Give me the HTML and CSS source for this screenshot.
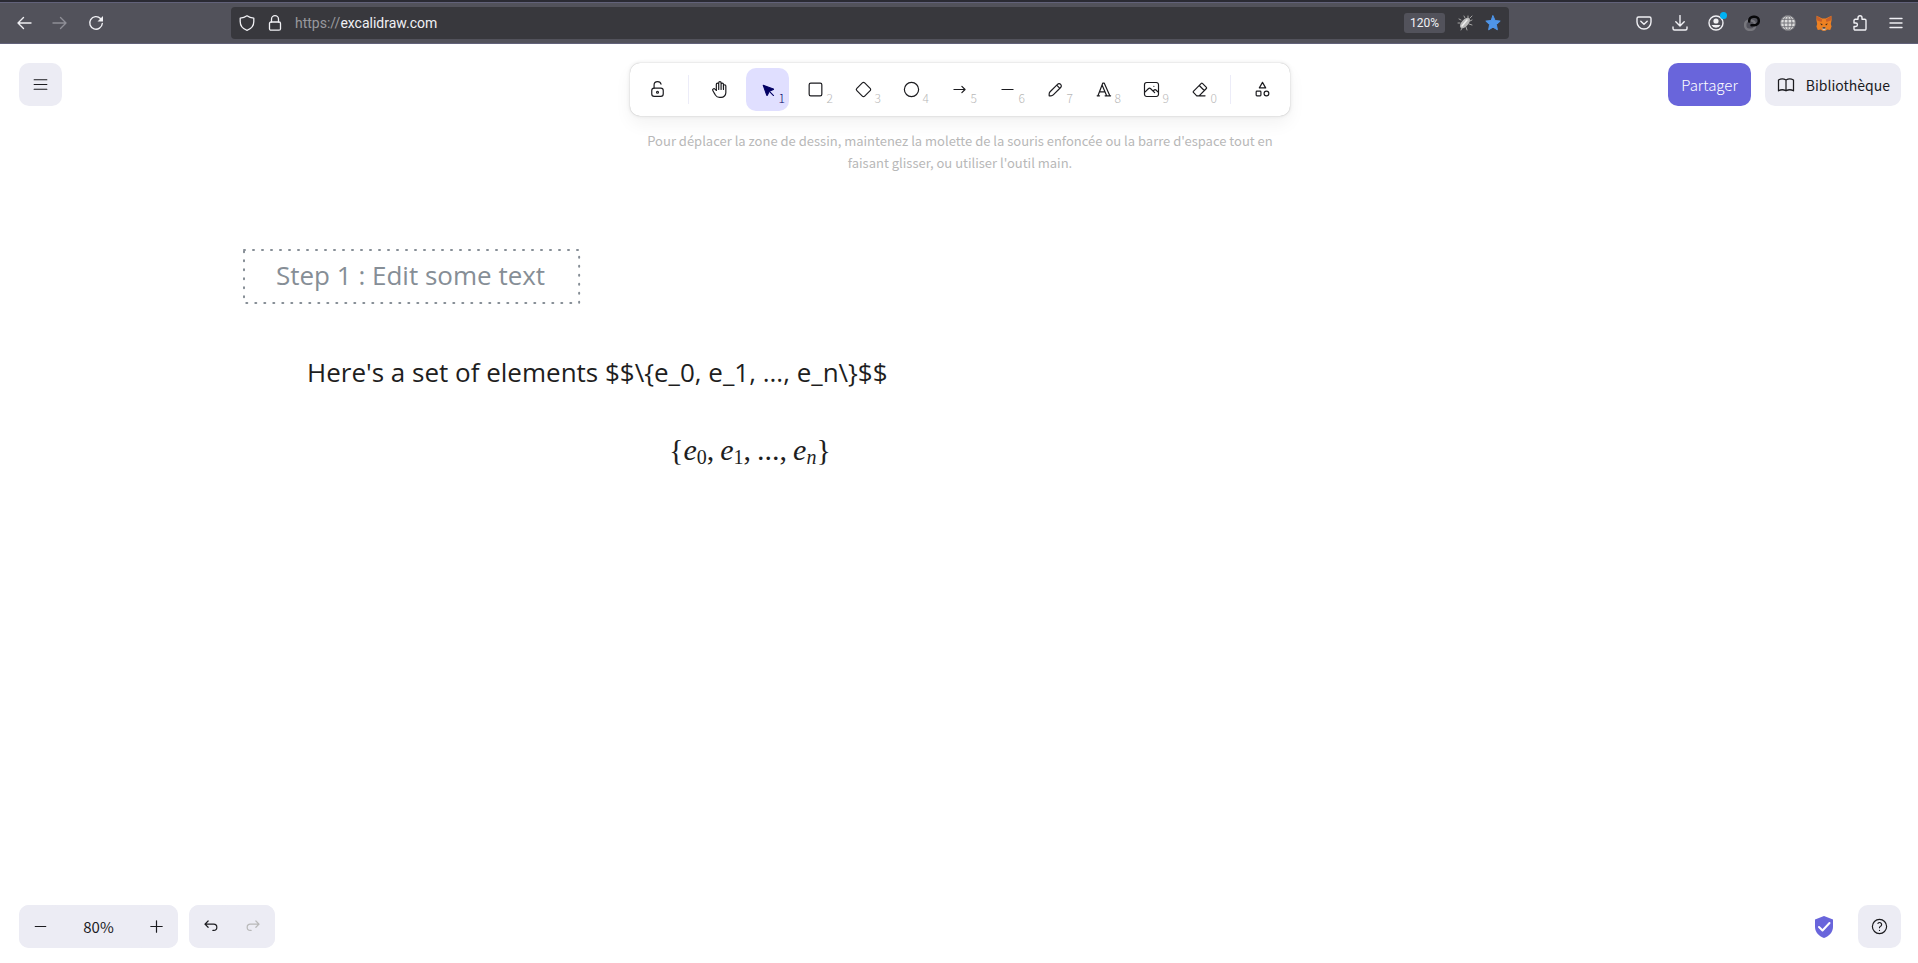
FILE: index.html
```html
<!DOCTYPE html>
<html lang="fr">
<head>
<meta charset="utf-8">
<title>Excalidraw</title>
<link rel="stylesheet" href="styles.css">
</head>
<body>
<header class="browser">
  <nav class="nav" aria-label="Navigation">
    <button class="chrome-btn" aria-label="Reculer"><svg viewBox="0 0 16 16"><path d="M15 8H2M7.500 2.500 2 8l5.500 5.500"/></svg></button>
    <button class="chrome-btn dim" aria-label="Avancer" disabled><svg viewBox="0 0 16 16"><path d="M1 8h13M8.500 2.500 14 8l-5.500 5.500"/></svg></button>
    <button class="chrome-btn" aria-label="Actualiser"><svg viewBox="0 0 16 16"><path d="M14.300 8.500A6.300 6.300 0 1 1 12.500 3.500"/><path class="solid" d="M15 1v5.500H9.500z"/></svg></button>
  </nav>
  <div class="urlbar">
    <svg class="url-icon" viewBox="0 0 16 16"><path d="M8 .8C6 2.300 3.800 3 1.200 3.200v3.300C1.200 11 4 13.900 8 15.300c4-1.400 6.800-4.300 6.800-8.800V3.200C12.200 3 10 2.300 8 .8z"/></svg>
    <svg class="url-icon" viewBox="0 0 16 16"><rect x="2.500" y="7" width="11" height="8.200" rx="1.500"/><path d="M4.500 7V4.200a3.500 3.500 0 0 1 7 0V7"/></svg>
    <a class="url" href="#"><span class="scheme">https://</span>excalidraw.com</a>
    <button class="zoom-badge">120%</button>
    <svg class="url-icon bug" viewBox="0 0 16 16"><path class="legs" d="M4 5 2 4M3 8H1M8 3 7 1M11 3V1M13 6l2-1M12 9l3 1M9 12l1 3M5 13l-1 2M13 3l2-2"/><ellipse cx="8" cy="8" rx="6.500" ry="3.300" transform="rotate(-48 8 8)"/><path class="shine" d="m5 11 5-6"/></svg>
    <svg class="url-icon star" viewBox="0 0 16 16"><path d="m8 .8 2.100 4.700 5.100.6-3.800 3.500 1 5.200L8 12.200l-4.400 2.600 1-5.200L.8 6.100l5.100-.6z"/></svg>
  </div>
  <nav class="extensions" aria-label="Extensions">
    <button class="chrome-btn" aria-label="Pocket"><svg viewBox="0 0 16 16"><path d="M2.500 2h11a1.500 1.500 0 0 1 1.500 1.500V7A7 7 0 0 1 1 7V3.500A1.500 1.500 0 0 1 2.500 2z"/><path d="m4.800 6.200 3.200 3 3.200-3"/></svg></button>
    <button class="chrome-btn" aria-label="Téléchargements"><svg viewBox="0 0 16 16"><path d="M8 .5v10.200M3.800 6.800 8 11l4.200-4.200M1 12v1.500A1.500 1.500 0 0 0 2.500 15h11a1.500 1.500 0 0 0 1.500-1.500V12"/></svg></button>
    <button class="chrome-btn account" aria-label="Compte"><svg viewBox="0 0 16 16"><circle cx="8" cy="8" r="7"/><circle class="solid" cx="8" cy="6" r="2.600"/><path class="solid" d="M3.500 10h9A5 5 0 0 1 8 12.800 5 5 0 0 1 3.500 10z"/></svg><span class="dot"></span></button>
    <button class="chrome-btn" aria-label="Lien"><svg class="link" viewBox="0 0 16 16"><rect class="gray" x="1.200" y="5.500" width="9.800" height="9.300" rx="4"/><path class="black" d="M5.200 6.500V5.800A4 4 0 0 1 9.200 1.800h1.600A4 4 0 0 1 14.800 5.800 4.300 4.300 0 0 1 10.500 10.200H7.500"/></svg></button>
    <button class="chrome-btn" aria-label="Langue"><svg class="globe" viewBox="0 0 16 16"><circle cx="8" cy="8" r="7.500"/><path d="M8 .5v15M.5 8h15M1.800 4.300h12.400M1.800 11.700h12.400"/><ellipse cx="8" cy="8" rx="4" ry="7.500"/></svg></button>
    <button class="chrome-btn" aria-label="Portefeuille"><svg class="fox" viewBox="0 0 16 16"><path class="o1" d="M.6.8 6.200 3.600h3.600L15.400.8 15.600 5l-.8 4 .8 2.600-1.400 3.400-3-.6-1.600 1.400H6.400l-1.600-1.400-3 .6L.4 11.600 1.200 9l-.8-4z"/><path class="o2" d="M.6.8 6.200 4.500 5.500 7 1.200 5.500zM15.400.8 9.800 4.500l.7 2.500 4.300-1.500z"/><path class="o3" d="m4 8.500 2.500.4L6 10.500zM12 8.500l-2.500.4.500 1.600z"/><path class="o4" d="m6.200 13.200.5-1h2.600l.5 1-.6 2H6.800z"/><path class="o3" d="M6.700 12.200h2.600l.3 1.400H6.400z"/></svg></button>
    <button class="chrome-btn" aria-label="Modules"><svg viewBox="0 0 16 16"><path d="M2 8V5.500A1.200 1.200 0 0 1 3.200 4.300H6V2.700a2 2 0 0 1 4 0v1.600h2.800A1.200 1.200 0 0 1 14 5.500v8.300a1.200 1.200 0 0 1-1.200 1.200H3.200A1.200 1.200 0 0 1 2 13.800v-2.300h1.700a1.750 1.750 0 0 0 0-3.500z"/></svg></button>
    <button class="chrome-btn" aria-label="Menu"><svg viewBox="0 0 16 16"><path d="M2 3.500h12M2 8h12M2 12.500h12"/></svg></button>
  </nav>
</header>
<main class="app">
  <section class="scene" aria-label="Canevas">
    <div class="node step">
      <svg class="frame"><rect x="1" y="1" width="100%" height="100%"/></svg>
      <span>Step 1 : Edit some text</span>
    </div>
    <p class="node source">Here's a set of elements $$\{e_0, e_1, ..., e_n\}$$</p>
    <p class="node formula">{<i>e</i><sub>0</sub>,&thinsp;<i>e</i><sub>1</sub>,&thinsp;...,&thinsp;<i>e</i><sub><i>n</i></sub>}</p>
  </section>
  <div class="top">
    <div class="side">
      <button class="box-btn" aria-label="Menu principal"><svg class="icon" viewBox="0 0 24 24"><path d="M4 6h16M4 12h16M4 18h16"/></svg></button>
    </div>
    <div class="center">
      <div class="toolbar" role="toolbar" aria-label="Outils">
        <button class="tool" aria-label="Verrouiller"><svg class="icon" viewBox="0 0 20 20"><path d="M13.542 8.542H6.458a2.500 2.500 0 0 0-2.500 2.500v3.750a2.500 2.500 0 0 0 2.500 2.500h7.084a2.500 2.500 0 0 0 2.500-2.500v-3.750a2.500 2.500 0 0 0-2.500-2.500Z"/><circle cx="10" cy="12.900" r="1.040"/><path d="M6.400 8.500V5.200c0-1.900 1.600-3.500 3.700-3.500 1.800 0 3.300 1.200 3.600 2.600"/></svg></button>
        <span class="divider"></span>
        <button class="tool" aria-label="Main"><svg class="icon" viewBox="0 0 24 24"><path d="M8 13V5.500a1.500 1.500 0 0 1 3 0V12M11 5.500v-2a1.500 1.500 0 1 1 3 0V12M14 5.500a1.500 1.500 0 0 1 3 0V12"/><path d="M17 7.500a1.500 1.500 0 0 1 3 0V16a6 6 0 0 1-6 6h-2a6 6 0 0 1-5.012-2.700L6.800 19c-.312-.479-1.407-2.388-3.286-5.728a1.500 1.500 0 0 1 .536-2.022 1.867 1.867 0 0 1 2.280.28L8 13"/></svg></button>
        <button class="tool selected" aria-label="Sélection"><svg class="icon filled" viewBox="0 0 22 22"><path d="m6 6 4.153 11.793a.365.365 0 0 0 .663 0L13 13l4.787-1.994a.355.355 0 0 0 0-.646z"/><path d="m13.500 13.500 4.500 4.500"/></svg><span class="key">1</span></button>
        <button class="tool" aria-label="Rectangle"><svg class="icon" viewBox="0 0 24 24"><rect x="4" y="4" width="16" height="16" rx="2"/></svg><span class="key">2</span></button>
        <button class="tool" aria-label="Losange"><svg class="icon" viewBox="0 0 24 24"><path d="m10.500 20.400-6.900-6.900c-.781-.781-.781-2.219 0-3l6.900-6.900c.781-.781 2.219-.781 3 0l6.900 6.900c.781.781.781 2.219 0 3l-6.900 6.900c-.781.781-2.219.781-3 0z"/></svg><span class="key">3</span></button>
        <button class="tool" aria-label="Ellipse"><svg class="icon" viewBox="0 0 24 24"><circle cx="12" cy="12" r="9"/></svg><span class="key">4</span></button>
        <button class="tool" aria-label="Flèche"><svg class="icon" viewBox="0 0 24 24"><path d="M5 12h14M15 16l4-4M15 8l4 4"/></svg><span class="key">5</span></button>
        <button class="tool" aria-label="Ligne"><svg class="icon" viewBox="0 0 20 20"><path d="M4.167 10h11.666"/></svg><span class="key">6</span></button>
        <button class="tool" aria-label="Dessin"><svg class="icon" viewBox="0 0 20 20"><path d="m7.643 15.690 7.774-7.773a2.357 2.357 0 1 0-3.334-3.334L4.310 12.357a3.333 3.333 0 0 0-.977 2.357v1.953h1.953c.884 0 1.732-.352 2.357-.977ZM11.250 5.417l3.333 3.333"/></svg><span class="key">7</span></button>
        <button class="tool" aria-label="Texte"><svg class="icon" viewBox="0 0 24 24"><path d="M4 20h3M14 20h7M6.900 15h6.900M10.200 6.300 16 20M5 20l6-16h2l7 16"/></svg><span class="key">8</span></button>
        <button class="tool" aria-label="Image"><svg class="icon" viewBox="0 0 20 20"><path d="M12.500 6.667h.01M4.910 2.625h10.180a2.284 2.284 0 0 1 2.285 2.284v10.182a2.284 2.284 0 0 1-2.284 2.284H4.909a2.284 2.284 0 0 1-2.284-2.284V4.909A2.284 2.284 0 0 1 4.909 2.625ZM3.333 12.500l3.334-3.333c.773-.745 1.726-.745 2.500 0l4.166 4.166M11.667 11.667l.833-.834c.774-.744 1.726-.744 2.500 0l1.667 1.667"/></svg><span class="key">9</span></button>
        <button class="tool" aria-label="Gomme"><svg class="icon" viewBox="0 0 24 24"><path d="M19 20H8.500l-4.210-4.300a1 1 0 0 1 0-1.410l10-10a1 1 0 0 1 1.410 0l5 5a1 1 0 0 1 0 1.410L11.500 20M18 13.300 11.700 7"/></svg><span class="key">0</span></button>
        <span class="divider"></span>
        <button class="tool" aria-label="Plus d'outils"><svg class="icon" viewBox="0 0 24 24"><path d="m12 3-4 7h8z"/><circle cx="17" cy="17" r="3"/><rect x="4" y="14" width="6" height="6" rx="1"/></svg></button>
      </div>
      <p class="hint">Pour déplacer la zone de dessin, maintenez la molette de la souris enfoncée ou la barre d'espace tout en faisant glisser, ou utiliser l'outil main.</p>
    </div>
    <div class="side end">
      <button class="share">Partager</button>
      <button class="library"><svg class="icon book" viewBox="0 0 24 24"><path d="M3 19a9 9 0 0 1 9 0 9 9 0 0 1 9 0M3 6a9 9 0 0 1 9 0 9 9 0 0 1 9 0M3 6v13M12 6v13M21 6v13"/></svg>Bibliothèque</button>
    </div>
  </div>
  <footer class="bottom">
    <div class="group">
      <button class="box-btn" aria-label="Zoom arrière"><svg class="icon" viewBox="0 0 20 20"><path d="M4.500 10h11"/></svg></button>
      <button class="zoom-value">80%</button>
      <button class="box-btn" aria-label="Zoom avant"><svg class="icon" viewBox="0 0 20 20"><path d="M10 4v12M4 10h12"/></svg></button>
    </div>
    <div class="group">
      <button class="box-btn" aria-label="Annuler"><svg class="icon" viewBox="0 0 20 20"><path d="M7.500 10.833 4.167 7.500 7.500 4.167M4.167 7.500h9.166a3.333 3.333 0 0 1 0 6.667H12.500"/></svg></button>
      <button class="box-btn off" aria-label="Rétablir" disabled><svg class="icon" viewBox="0 0 20 20"><path d="m12.500 10.833 3.333-3.333L12.500 4.167M15.833 7.500H6.667a3.333 3.333 0 1 0 0 6.667H7.500"/></svg></button>
    </div>
    <div class="help-area">
      <a class="shield" href="#" aria-label="Chiffrement"><svg viewBox="0 0 18 22"><path d="M9 0 0 3.500V11c0 5 3.800 9 9 11 5.200-2 9-6 9-11V3.500z"/><path class="check" d="m4 11 3.500 3.500L14.500 7"/></svg></a>
      <button class="box-btn" aria-label="Aide"><svg class="icon" viewBox="0 0 24 24"><circle cx="12" cy="12" r="9"/><path d="M12 17v.01M12 13.500a1.500 1.500 0 0 1 1-1.500 2.600 2.600 0 1 0-3-4"/></svg></button>
    </div>
  </footer>
</main>
</body>
</html>
```
FILE: styles.css
```css
* { box-sizing: border-box; }
html, body { height: 100%; }
body {
  margin: 0;
  display: flex;
  flex-direction: column;
  background: #fff;
  color: #1b1b1f;
  font-family: "Noto Sans CJK SC", "Noto Sans", sans-serif;
  font-size: 14px;
}
button { border: 0; padding: 0; margin: 0; background: none; color: inherit; font: inherit; }
p { margin: 0; }
svg { display: block; fill: none; stroke: currentColor; stroke-linecap: round; stroke-linejoin: round; }

/* Browser bar */
.browser {
  display: flex;
  align-items: center;
  justify-content: space-between;
  height: 44px;
  padding: 0 4px 0 6px;
  background: #52525b;
  border-top: 2px solid #2a2a33;
  border-bottom: 1px solid #62627a;
  box-shadow: inset 0 1px #62627a;
  color: #f0f0f4;
  font-family: Roboto, sans-serif;
}
.nav, .extensions { display: flex; }
.nav { width: 225px; }
.chrome-btn { position: relative; display: grid; place-items: center; width: 36px; height: 36px; }
.chrome-btn svg { width: 16px; height: 16px; stroke-width: 1.4; }
.dim { color: #8f8f97; }
.solid { fill: currentColor; stroke: none; }
.urlbar {
  display: flex;
  align-items: center;
  flex: 0 1 1278px;
  height: 32px;
  padding: 0 8px;
  margin-right: auto;
  border-radius: 4px;
  background: #38383d;
}
.url-icon { width: 16px; height: 16px; margin-right: 12px; stroke-width: 1.3; }
.url { flex: 1; color: #f0f0f4; text-decoration: none; font-size: 14px; }
.scheme { color: #98989e; }
.zoom-badge { width: 41px; height: 20px; margin-right: 12px; border-radius: 3px; background: #52525b; font-size: 12px; }
.bug ellipse { fill: #b9b9b9; stroke: none; }
.bug .legs { stroke: #a5a5a5; stroke-width: 1; }
.bug .shine { stroke: #eee; stroke-width: 1.5; }
.star { margin: 0; fill: #4f95e8; stroke: #4f95e8; stroke-width: 1; }
.dot { position: absolute; top: 7px; right: 7px; width: 7px; height: 7px; border-radius: 50%; background: #00b3f4; }
.chrome-btn .link { stroke-width: 2.5; }
.gray { stroke: #77777d; }
.black { stroke: #08080a; }
.chrome-btn .globe { fill: #ddd; stroke: #77777d; stroke-width: 1; }
.globe ellipse { fill: none; }
.fox path { stroke: none; }
.o1 { fill: #ee8122; }
.o2 { fill: #c9602a; }
.o3 { fill: #30251f; }
.o4 { fill: #d5c3b5; }

/* Editor */
.app { position: relative; flex: 1; display: flex; flex-direction: column; justify-content: space-between; padding: 19px 17px 15px 19px; }
.scene { position: absolute; inset: 0; overflow: hidden; }
.node { position: absolute; white-space: nowrap; }
.step {
  left: 243px;
  top: 205px;
  padding: 9px 33px 10px;
  color: #868e96;
  font: 500 26px/34px "Open Sans", sans-serif;
}
.frame { position: absolute; inset: 0; width: 100%; height: 100%; overflow: visible; stroke-width: 2; stroke-dasharray: 1 8; }
.source { left: 307px; top: 310px; color: #1e1e1e; font: 500 26px/36px "Open Sans", sans-serif; }
.formula { left: 669px; top: 386px; color: #1e1e1e; font: 30px/40px "Liberation Serif", serif; }
.formula sub { font-size: 20px; line-height: 0; vertical-align: -4px; }
.top, .bottom { position: relative; display: flex; }
.top { align-items: flex-start; }
.side { flex: 1; display: flex; }
.end { justify-content: flex-end; gap: 14px; }
.box-btn { display: grid; place-items: center; width: 43px; height: 43px; border-radius: 10px; background: #ececf4; }
.icon { width: 19px; height: 19px; stroke-width: 1.5; }
.icon[viewBox="0 0 20 20"], .icon[viewBox="0 0 22 22"] { stroke-width: 1.25; }
.center { display: flex; flex-direction: column; align-items: center; }
.toolbar {
  display: flex;
  align-items: center;
  gap: 5px;
  padding: 5px 6px;
  border-radius: 10px;
  background: #fff;
  box-shadow: 0 0 1px rgba(0,0,0,.3), 0 0 4px rgba(0,0,0,.1), 0 8px 17px rgba(0,0,0,.05);
}
.tool { position: relative; display: grid; place-items: center; width: 43px; height: 43px; border-radius: 10px; }
.key { position: absolute; right: 4px; bottom: 5px; color: #b8b8b8; font-size: 12px; line-height: 16px; font-weight: 300; }
.selected { background: #e0dfff; color: #030064; }
.selected .key { color: #030064; }
.filled { fill: currentColor; }
.divider { width: 1px; height: 29px; margin: 0 4px 0 4px; background: #ececf8; }
.divider:last-of-type { margin-right: 5px; }
.hint { max-width: 630px; margin-top: 14px; color: #b8b8b8; font-size: 13px; line-height: 22px; text-align: center; }
.share { height: 43px; padding: 0 13px; border-radius: 10px; background: #6965db; color: #fff; font-size: 15px; font-weight: 300; }
.library { display: flex; align-items: center; gap: 10px; height: 43px; padding: 0 11px; border-radius: 10px; background: #ececf4; }
.library .book { width: 20px; height: 20px; }
.bottom { gap: 11px; }
.group { display: flex; border-radius: 10px; background: #ececf4; }
.zoom-value { width: 73px; font-size: 15px; }
.off { color: #b8b8b8; }
.help-area { display: flex; align-items: center; gap: 25px; margin-left: auto; }
.shield svg { width: 18px; height: 22px; fill: #6965db; stroke: none; }
.shield .check { fill: none; stroke: #fff; stroke-width: 2; }
```
